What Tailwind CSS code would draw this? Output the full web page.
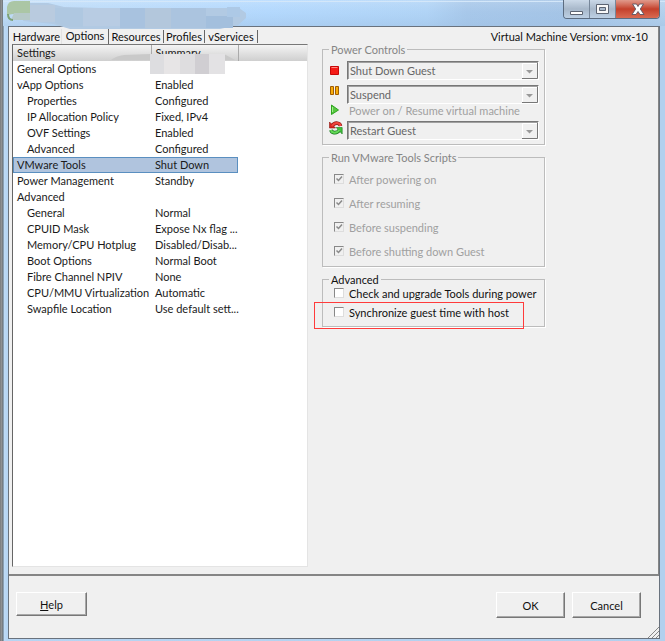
<!DOCTYPE html>
<html lang="en">
<head>
<meta charset="utf-8">
<title>Virtual Machine Properties</title>
<script src="https://cdn.jsdelivr.net/npm/@tailwindcss/browser@4"></script>
</head>
<body class="bg-[#858789] font-[Lato,sans-serif] text-[11px] leading-[15px] text-[#1a1a1a]">
<div class="flex h-screen flex-col bg-[linear-gradient(90deg,#77797c_0,#97999b_2px,#55616c_3px,#c0dcf7_4px,#b7d5f3_6px,#b2d0ee_100%)] pr-[5px] pb-[2px] pl-2">

  <header class="relative flex h-[26px] shrink-0 justify-end">
    <svg class="absolute top-0 -left-[5px] h-full w-[calc(100%_+_10px)]" preserveAspectRatio="none" viewBox="0 0 662 26" aria-hidden="true">
      <defs>
        <linearGradient id="glass" x1="0" x2="1" y1="0" y2="0"><stop offset="0" stop-color="#c4dff8"/><stop offset=".4" stop-color="#b5daff"/><stop offset=".64" stop-color="#b2d5f7"/><stop offset=".7" stop-color="#a8c8ea"/><stop offset=".85" stop-color="#a5c4e6"/><stop offset="1" stop-color="#b6d2ed"/></linearGradient>
        <linearGradient id="shade" x1="0" x2="0" y1="0" y2="1"><stop offset="0" stop-color="#fff" stop-opacity=".15"/><stop offset=".5" stop-color="#9fc4e8" stop-opacity=".1"/><stop offset="1" stop-color="#9dbfe2" stop-opacity=".45"/></linearGradient>
      </defs>
      <path fill="url(#glass)" d="M0 0h662v26H0z"/><path fill="url(#shade)" d="M0 0h662v26H0z"/>
      <path fill="#d4e7f9" d="M0 1h662v1H0z"/>
    </svg>
    <svg class="absolute top-0 -left-[5px] z-10 h-[29px] w-[250px]" viewBox="0 0 250 29" aria-hidden="true">
      <path fill="#b2cae3" d="M27 3h18l16 4 35 1h140l7 5v5l-8 7-18 4H67L50 24 20 21z"/>
      <path fill="#abc6a5" d="M4 7Q5 1 11 1h16v13H10L4 15z"/><path fill="#b6c9c8" d="M11 13h16v7H8z"/>
      <path fill="#b9cbdf" d="M27 5h25v17H27z"/><path fill="#afc8e1" d="M52 8h28v19H62l-10-4z"/>
      <path fill="#b8cce3" d="M80 8h37v18H80z"/><path fill="#a8c2df" d="M117 8h25v20h-25z"/><path fill="#b3c7dc" d="M142 8h26v20h-26z"/><path fill="#abc4df" d="M168 8h35v20h-35z"/><path fill="#a3bfdd" d="M203 16h27v12h-27z"/><path fill="#adc9e6" d="M224 7h13v10h-13z"/>
      <path fill="none" stroke="#7da278" stroke-width="2" d="M5 14q0 6 5 6"/>
    </svg>
    <div class="relative flex h-[19px] overflow-hidden rounded-b-[4px] border border-t-0 border-[#5c6c80]">
      <button type="button" aria-label="Minimize" class="flex w-[26px] items-center justify-center border-r border-[#77879a] bg-linear-to-b from-[#cbd9e8] via-[#a8b8ca] to-[#bdd0e4]">
        <svg class="h-[14px] w-[16px]" viewBox="0 0 16 14"><path fill="#fff" stroke="#5c6472" d="M1.500 9.500h12v3h-12z"/></svg></button>
      <button type="button" aria-label="Maximize" class="flex w-[26px] items-center justify-center border-r border-[#77879a] bg-linear-to-b from-[#cbd9e8] via-[#a8b8ca] to-[#bdd0e4]">
        <svg class="h-[12px] w-[14px]" viewBox="0 0 14 12"><path fill="#f8f8f8" fill-rule="evenodd" stroke="#5c6472" d="M.5 1.500h12v9H.5zM3.500 4.500v3h6v-3z"/></svg></button>
      <button type="button" aria-label="Close" class="flex w-[43px] items-center justify-center bg-linear-to-b from-[#e09a8c] via-[#c4402b] to-[#d96a52]">
        <svg class="h-[13px] w-[14px]" viewBox="0 0 14 13"><path fill="#fff" stroke="#5a5563" stroke-width=".9" d="M1.500 1h4L7 3.500 8.500 1h4L9.300 6 13 11.500H9L7 8.500l-2 3H1l3.700-5.500z"/></svg></button>
    </div>
  </header>

  <main class="relative flex min-h-0 grow flex-col border border-[#69727d] bg-[#f0f0f0]">
    <section class="flex min-h-0 grow flex-col border-r border-b-2 border-[#858585]">
      <div class="flex h-[17px] shrink-0 items-end justify-between pr-[10px] pl-[3px]">
        <div role="tablist" class="flex h-[15px] items-center text-[#111]">
          <button type="button" role="tab" class="h-[15px] w-[50px] border-r border-[#e2e2e2]">Hardware</button>
          <button type="button" role="tab" aria-selected="true" class="-mt-[3px] h-[17px] w-[47px] border-r border-[#666]">Options</button>
          <button type="button" role="tab" class="h-[13px] w-[55px] border-r border-[#666] leading-[13px]">Resources</button>
          <button type="button" role="tab" class="h-[13px] w-[41px] border-r border-[#666] leading-[13px]">Profiles</button>
          <button type="button" role="tab" class="h-[13px] w-[53px] border-r border-[#666] leading-[13px]">vServices</button>
        </div>
        <p class="text-[#111]">Virtual Machine Version: vmx-10</p>
      </div>

      <div class="flex min-h-0 grow">
        <div class="relative mb-[7px] ml-[3px] w-[296px] shrink-0 border border-t-[#777] border-r-[#e4e4e4] border-b-[#e4e4e4] border-l-[#666] bg-white">
          <table class="h-[271px] w-full table-fixed border-collapse text-left whitespace-nowrap">
            <colgroup><col class="w-[138px]"><col class="w-[87px]"><col></colgroup>
            <thead>
              <tr class="h-[16px] bg-linear-to-b from-[#f4f4f4] to-[#cfcfcf] leading-[14px]">
                <th scope="col" class="border-r border-[#aaa] p-0 pl-1 font-normal">Settings</th>
                <th scope="col" class="border-r border-[#aaa] p-0 pl-1 font-normal">Summary</th>
                <td class="p-0"></td>
              </tr>
            </thead>
            <tbody>
              <tr><td class="p-0 pl-1">General Options</td><td class="p-0 pl-1"></td></tr>
              <tr><td class="p-0 pl-1">vApp Options</td><td class="p-0 pl-1">Enabled</td></tr>
              <tr><td class="p-0 pl-[14px]">Properties</td><td class="p-0 pl-1">Configured</td></tr>
              <tr><td class="p-0 pl-[14px]">IP Allocation Policy</td><td class="p-0 pl-1">Fixed, IPv4</td></tr>
              <tr><td class="p-0 pl-[14px]">OVF Settings</td><td class="p-0 pl-1">Enabled</td></tr>
              <tr><td class="p-0 pl-[14px]">Advanced</td><td class="p-0 pl-1">Configured</td></tr>
              <tr><td class="bg-[#b0c4de] p-0 pl-1 shadow-[inset_1px_1px_#5a8fc0,inset_0_-1px_#5a8fc0]">VMware Tools</td><td class="bg-[#b0c4de] p-0 pl-1 shadow-[inset_-1px_-1px_#5a8fc0,inset_0_1px_#5a8fc0]">Shut Down</td></tr>
              <tr><td class="p-0 pl-1">Power Management</td><td class="p-0 pl-1">Standby</td></tr>
              <tr><td class="p-0 pl-1">Advanced</td><td class="p-0 pl-1"></td></tr>
              <tr><td class="p-0 pl-[14px]">General</td><td class="p-0 pl-1">Normal</td></tr>
              <tr><td class="p-0 pl-[14px]">CPUID Mask</td><td class="p-0 pl-1">Expose Nx flag ...</td></tr>
              <tr><td class="p-0 pl-[14px]">Memory/CPU Hotplug</td><td class="p-0 pl-1">Disabled/Disab...</td></tr>
              <tr><td class="p-0 pl-[14px]">Boot Options</td><td class="p-0 pl-1">Normal Boot</td></tr>
              <tr><td class="p-0 pl-[14px]">Fibre Channel NPIV</td><td class="p-0 pl-1">None</td></tr>
              <tr><td class="p-0 pl-[14px]">CPU/MMU Virtualization</td><td class="p-0 pl-1">Automatic</td></tr>
              <tr><td class="p-0 pl-[14px]">Swapfile Location</td><td class="p-0 pl-1">Use default sett...</td></tr>
            </tbody>
          </table>
          <svg class="absolute top-[8px] left-[98px] h-[21px] w-[125px]" viewBox="0 0 125 21" aria-hidden="true">
            <path fill="#c9c9c9" d="M0 7Q5 3 13 2l26-1h74l11 6z"/>
            <path fill="#dddde0" d="M39 1h14v20H39z"/><path fill="#e7e5e6" d="M53 1h16v20H53z"/><path fill="#dedddf" d="M69 1h15v20H69z"/><path fill="#d0ced2" d="M84 1h14v20H84z"/><path fill="#e3e2e4" d="M98 1h16v20H98z"/>
          </svg>
        </div>

        <form class="w-[237px] shrink-0 pl-[14px] text-[#858585]">
          <fieldset disabled class="-mt-[2px] w-[223px] min-w-0 border border-[#bcbcbc] pr-[5px] pb-1 pl-[6px] shadow-[1px_1px_#fff]">
            <legend class="px-[2px]">Power Controls</legend>
            <div class="mt-1 mb-[5px] flex h-[19px] items-center gap-1">
              <svg class="h-[14px] w-[14px] shrink-0" viewBox="0 0 14 14"><path fill="#f51b16" stroke="#c70707" d="M1.500 2.500h8v8h-8z"/><path stroke="#ff8a80" d="M2.500 3.500h6"/></svg>
              <div class="relative h-full grow">
                <select aria-label="Power off action" class="block h-full w-full appearance-none border border-t-[#777] border-r-white border-b-white border-l-[#777] pl-[2px] text-[#666] opacity-100 shadow-[inset_1px_1px_#a0a0a0]"><option>Shut Down Guest</option></select>
                <svg class="pointer-events-none absolute top-[2px] right-px h-4 w-4" viewBox="0 0 16 16"><path fill="#f0f0f0" d="M0 0h16v16H0z"/><path fill="none" stroke="#fff" d="M.5 15V.5H15"/><path fill="none" stroke="#777" d="M15.500 0v15.500H0"/><path fill="#999" d="M4 7h7L7.500 10.500z"/></svg>
              </div>
            </div>
            <div class="flex h-[19px] gap-1">
              <svg class="h-[14px] w-[14px] shrink-0" viewBox="0 0 14 14"><path fill="#f8ad0b" stroke="#a05c00" d="M1.500 1.500h3v8h-3zM6.500 1.500h3v8h-3z"/></svg>
              <div class="relative h-full grow">
                <select aria-label="Suspend action" class="block h-full w-full appearance-none border border-t-[#777] border-r-white border-b-white border-l-[#777] pl-[2px] text-[#666] opacity-100 shadow-[inset_1px_1px_#a0a0a0]"><option>Suspend</option></select>
                <svg class="pointer-events-none absolute top-[2px] right-px h-4 w-4" viewBox="0 0 16 16"><path fill="#f0f0f0" d="M0 0h16v16H0z"/><path fill="none" stroke="#fff" d="M.5 15V.5H15"/><path fill="none" stroke="#777" d="M15.500 0v15.500H0"/><path fill="#999" d="M4 7h7L7.500 10.500z"/></svg>
              </div>
            </div>
            <div class="flex h-[17px] gap-[6px] text-[#a0a0a0]">
              <svg class="h-[12px] w-[14px] shrink-0" viewBox="0 0 14 12"><path fill="#55c83f" stroke="#2ea31f" d="M2.500 1v9.500L9.500 6z"/><path stroke="#a5eb91" d="M3.500 3v5"/></svg>
              <span class="leading-[13px]">Power on / Resume virtual machine</span>
            </div>
            <div class="flex h-[19px] gap-1">
              <svg class="h-[14px] w-[14px] shrink-0" viewBox="0 0 14 14"><path fill="none" stroke="#8c1511" stroke-width="3.600" d="M3 5Q5 1.800 8.500 2.200q2.500.3 3 2.800"/><path fill="#d9241e" stroke="#8c1511" stroke-width=".6" d="M.5 1v6h6z"/><path fill="none" stroke="#f0453c" stroke-width="2.200" d="M3 5Q5 1.800 8.500 2.200q2.500.3 3 2.800"/><path fill="none" stroke="#14781a" stroke-width="3.600" d="M10.500 9Q8.500 12 5 11.600 2.500 11.300 2 9"/><path fill="#3fc03a" stroke="#14781a" stroke-width=".6" d="M13.200 13V6.500h-6z"/><path fill="none" stroke="#63d857" stroke-width="2.200" d="M10.500 9Q8.500 12 5 11.600 2.500 11.300 2 9"/></svg>
              <div class="relative h-full grow">
                <select aria-label="Restart action" class="block h-full w-full appearance-none border border-t-[#777] border-r-white border-b-white border-l-[#777] pl-[2px] text-[#666] opacity-100 shadow-[inset_1px_1px_#a0a0a0]"><option>Restart Guest</option></select>
                <svg class="pointer-events-none absolute top-[2px] right-px h-4 w-4" viewBox="0 0 16 16"><path fill="#f0f0f0" d="M0 0h16v16H0z"/><path fill="none" stroke="#fff" d="M.5 15V.5H15"/><path fill="none" stroke="#777" d="M15.500 0v15.500H0"/><path fill="#999" d="M4 7h7L7.500 10.500z"/></svg>
              </div>
            </div>
          </fieldset>

          <fieldset disabled class="mt-[5px] w-[223px] min-w-0 border border-[#bcbcbc] px-[6px] pb-[3px] shadow-[1px_1px_#fff]">
            <legend class="px-[2px]">Run VMware Tools Scripts</legend>
            <div class="mt-[2px] text-[#a0a0a0]">
              <label class="flex h-6 items-center gap-[5px] pl-[5px]"><span class="relative h-[10px] w-[10px]"><input type="checkbox" checked class="block h-[10px] w-[10px] appearance-none border border-t-[#888] border-r-[#ddd] border-b-[#ddd] border-l-[#888]"><svg class="absolute top-0 left-0 h-[10px] w-[10px]" viewBox="0 0 10 10"><path fill="none" stroke="#8a8a8a" stroke-width="1.500" d="M2.500 4.500l2 2 3.500-4"/></svg></span>After powering on</label>
              <label class="flex h-6 items-center gap-[5px] pl-[5px]"><span class="relative h-[10px] w-[10px]"><input type="checkbox" checked class="block h-[10px] w-[10px] appearance-none border border-t-[#888] border-r-[#ddd] border-b-[#ddd] border-l-[#888]"><svg class="absolute top-0 left-0 h-[10px] w-[10px]" viewBox="0 0 10 10"><path fill="none" stroke="#8a8a8a" stroke-width="1.500" d="M2.500 4.500l2 2 3.500-4"/></svg></span>After resuming</label>
              <label class="flex h-6 items-center gap-[5px] pl-[5px]"><span class="relative h-[10px] w-[10px]"><input type="checkbox" checked class="block h-[10px] w-[10px] appearance-none border border-t-[#888] border-r-[#ddd] border-b-[#ddd] border-l-[#888]"><svg class="absolute top-0 left-0 h-[10px] w-[10px]" viewBox="0 0 10 10"><path fill="none" stroke="#8a8a8a" stroke-width="1.500" d="M2.500 4.500l2 2 3.500-4"/></svg></span>Before suspending</label>
              <label class="flex h-6 items-center gap-[5px] pl-[5px]"><span class="relative h-[10px] w-[10px]"><input type="checkbox" checked class="block h-[10px] w-[10px] appearance-none border border-t-[#888] border-r-[#ddd] border-b-[#ddd] border-l-[#888]"><svg class="absolute top-0 left-0 h-[10px] w-[10px]" viewBox="0 0 10 10"><path fill="none" stroke="#8a8a8a" stroke-width="1.500" d="M2.500 4.500l2 2 3.500-4"/></svg></span>Before shutting down Guest</label>
            </div>
          </fieldset>

          <fieldset class="relative mt-[5px] w-[223px] min-w-0 border border-[#bcbcbc] px-[6px] pb-2 text-[#111] shadow-[1px_1px_#fff]">
            <legend class="px-[2px]">Advanced</legend>
            <div class="flex flex-col gap-[7px]">
              <label class="flex h-3 items-center gap-[5px] pl-[5px] whitespace-nowrap"><input type="checkbox" class="block h-[10px] w-[10px] shrink-0 appearance-none border border-t-[#888] border-r-[#ddd] border-b-[#ddd] border-l-[#888] bg-white">Check and upgrade Tools during power</label>
              <label class="flex h-3 items-center gap-[5px] pl-[5px] whitespace-nowrap"><input type="checkbox" class="block h-[10px] w-[10px] shrink-0 appearance-none border border-t-[#888] border-r-[#ddd] border-b-[#ddd] border-l-[#888] bg-white">Synchronize guest time with host</label>
            </div>
            <div class="pointer-events-none absolute -bottom-[3px] -left-[9px] h-[27px] w-[210px] border border-[#ff3b3b]"></div>
          </fieldset>
        </form>
      </div>
    </section>

    <footer class="flex h-[62px] shrink-0 items-start justify-between pt-4 pr-[18px] pl-[7px] text-[#111]">
      <button type="button" class="h-6 w-[71px] border border-t-white border-r-[#777] border-b-[#777] border-l-white shadow-[inset_-1px_-1px_#a8a8a8]"><u>H</u>elp</button>
      <div class="flex gap-[7px]">
        <button type="button" class="h-[26px] w-[69px] border border-t-white border-r-[#777] border-b-[#777] border-l-white shadow-[inset_-1px_-1px_#a8a8a8]">OK</button>
        <button type="button" class="h-[26px] w-[69px] border border-t-white border-r-[#777] border-b-[#777] border-l-white shadow-[inset_-1px_-1px_#a8a8a8]">Cancel</button>
      </div>
    </footer>
    <svg class="absolute right-0 bottom-0 h-[11px] w-[11px]" viewBox="0 0 11 11" aria-hidden="true"><path stroke="#888" d="M0 11L11 0M4 11l7-7M8 11l3-3"/></svg>
  </main>
</div>
</body>
</html>
